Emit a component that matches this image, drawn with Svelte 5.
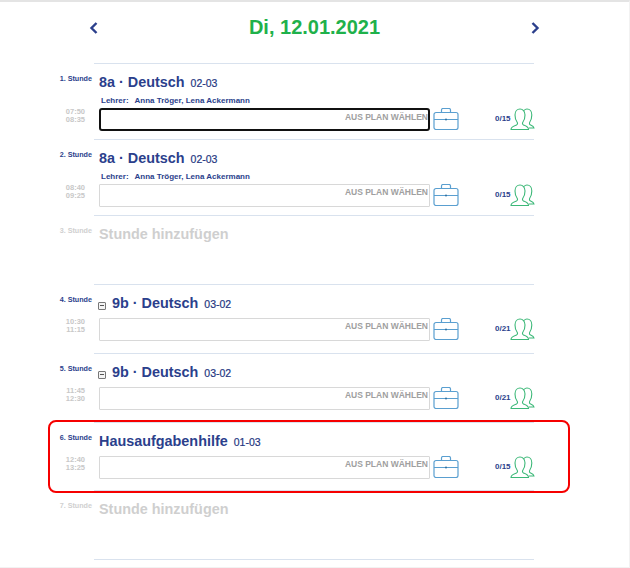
<script>
  const lessons = [
    { nr: 1, title: '8a · Deutsch', room: '02-03', teachers: 'Anna Tröger, Lena Ackermann', from: '07:50', to: '08:35', count: '0/15', focused: true, height: 76 },
    { nr: 2, title: '8a · Deutsch', room: '02-03', teachers: 'Anna Tröger, Lena Ackermann', from: '08:40', to: '09:25', count: '0/15', height: 76 },
    { nr: 3, empty: true, height: 69 },
    { nr: 4, title: '9b · Deutsch', room: '03-02', collapse: true, from: '10:30', to: '11:15', count: '0/21', height: 69 },
    { nr: 5, title: '9b · Deutsch', room: '03-02', collapse: true, from: '11:45', to: '12:30', count: '0/21', height: 69 },
    { nr: 6, title: 'Hausaufgabenhilfe', room: '01-03', from: '12:40', to: '13:25', count: '0/15', marked: true, height: 68 },
    { nr: 7, empty: true, height: 69 }
  ];
</script>

<div class="page">
  <header class="head">
    <button class="nav" aria-label="Zurück">
      <svg viewBox="0 0 10 14" width="10" height="14"><path d="M7.500 2 2.500 7l5 5" /></svg>
    </button>
    <h1>Di, 12.01.2021</h1>
    <button class="nav" aria-label="Weiter">
      <svg viewBox="0 0 10 14" width="10" height="14"><path d="M2.500 2l5 5-5 5" /></svg>
    </button>
  </header>

  <div class="list">
    {#each lessons as l}
      <section class="row" class:marked={l.marked} style="height: {l.height}px">
        <div class="side" class:faded={l.empty}>
          <div class="nr">{l.nr}. Stunde</div>
          {#if !l.empty}
            <div class="time" class:low={l.teachers}>{l.from}<br />{l.to}</div>
          {/if}
        </div>
        <div class="body">
          {#if l.empty}
            <div class="add">Stunde hinzufügen</div>
          {:else}
            <div class="title">
              {#if l.collapse}<span class="minus"></span>{/if}
              <span class="name">{l.title}</span>
              <span class="room">{l.room}</span>
            </div>
            {#if l.teachers}
              <div class="teachers"><span>Lehrer:</span>{l.teachers}</div>
            {/if}
            <div class="tools">
              <div class="field" class:focused={l.focused}>AUS PLAN WÄHLEN</div>
              <svg class="case" viewBox="0 0 26 22" width="26" height="22">
                <path d="M1 6.500a2 2 0 0 1 2-2h20a2 2 0 0 1 2 2v13a2 2 0 0 1-2 2H3a2 2 0 0 1-2-2zM1 11.500h24M8.500 4.500V2a1.500 1.500 0 0 1 1.500-1.500h6A1.500 1.500 0 0 1 17.500 2v2.500" />
                <circle cx="13" cy="11.500" r="1" />
              </svg>
              <span class="count">{l.count}</span>
              <svg class="people" viewBox="0 0 25 22" width="25" height="22">
                <path d="M1 21.500c0-3 3-3.500 5.500-4.500 1-.5 1.200-1.500.8-2.500C6 13 5 10.500 5 7c0-3.500 2.200-6 5-6s5 2.500 5 6c0 3.500-1 6-2.300 7.500-.4 1-.2 2 .8 2.500 2 .8 5 1.500 5 4.500z" />
                <path d="M14 2.500c.8-1 1.900-1.500 3-1.500 2.800 0 4.800 2.500 4.800 6 0 3.500-1 6-2.200 7.500-.4 1-.2 2 .8 2.500 1.500.6 3.300 1.200 3.600 3h-5" />
              </svg>
            </div>
          {/if}
        </div>
      </section>
    {/each}
    <div class="end"></div>
  </div>
</div>

<style>
  :global(body) {
    margin: 0;
    background: #fff;
  }
  .page {
    width: 630px;
    height: 568px;
    box-sizing: border-box;
    border-top: 2px solid #e4e4e4;
    border-right: 1px solid #f2f2f2;
    border-bottom: 1px solid #f2f2f2;
    font-family: "Liberation Sans", Arial, sans-serif;
    overflow: hidden;
  }
  .head {
    display: flex;
    align-items: center;
    justify-content: space-between;
    height: 51px;
    padding: 0 89px;
  }
  .nav {
    display: flex;
    padding: 0;
    border: 0;
    background: none;
  }
  .nav path {
    fill: none;
    stroke: #2b3f8c;
    stroke-width: 2.400;
  }
  h1 {
    margin: 0;
    font-size: 20px;
    font-weight: 700;
    color: #1fb14b;
  }
  .list {
    margin: 10px 0 0 50px;
    width: 484px;
  }
  .row {
    position: relative;
    display: grid;
    grid-template-columns: 44px 1fr;
  }
  .marked::after {
    content: "";
    position: absolute;
    inset: -2px -36px -3px -2px;
    border: 2px solid #f60000;
    border-radius: 8px;
  }
  .side {
    position: relative;
    padding: 11px 2px 0 0;
    text-align: right;
    font-size: 7.200px;
    font-weight: 700;
    color: #2b3f8c;
  }
  .side.faded { color: #d0d0d0; }
  .time {
    position: absolute;
    top: 34px;
    right: 9px;
    font-size: 7.500px;
    line-height: 8px;
    color: #c8c8c8;
  }
  .time.low { top: 45px; }
  .body {
    border-top: 1px solid #d9e2ee;
    padding: 0 0 0 5px;
    min-width: 0;
  }
  .title {
    display: flex;
    align-items: baseline;
    height: 20px;
    margin-top: 10px;
    color: #2b3f8c;
    white-space: nowrap;
  }
  .name {
    font-size: 14.400px;
    font-weight: 700;
  }
  .room {
    margin-left: 6px;
    font-size: 10.500px;
    color: #24367f;
    -webkit-text-stroke: 0.2px #24367f;
  }
  .minus {
    position: relative;
    align-self: center;
    box-sizing: border-box;
    flex: none;
    width: 8px;
    height: 8px;
    margin: 2px 6px 0 -1px;
    border: 1px solid #777;
    border-radius: 1px;
    background: #f4f4f4;
  }
  .minus::after {
    content: "";
    position: absolute;
    left: 1px;
    right: 1px;
    top: 2px;
    height: 1px;
    background: #555;
  }
  .teachers {
    margin: 1px 0 -1px 2px;
    font-size: 8px;
    font-weight: 700;
    color: #2b3f8c;
    line-height: 11px;
    white-space: nowrap;
  }
  .teachers span { margin-right: 6px; }
  .tools {
    display: flex;
    align-items: flex-start;
    margin-top: 3px;
  }
  .tools > * { flex: none; }
  .field {
    box-sizing: border-box;
    width: 331px;
    height: 23px;
    padding: 2px 1px 0 0;
    border: 1px solid #d8d8d8;
    border-radius: 1px;
    text-align: right;
    font-size: 8.500px;
    font-weight: 700;
    color: #a0a0a0;
    white-space: nowrap;
  }
  .field.focused {
    border: 2px solid #111;
    border-radius: 3px;
    padding-top: 2px;
    padding-right: 0;
  }
  .case {
    margin-left: 3px;
  }
  .case path {
    fill: none;
    stroke: #5a9fd0;
    stroke-width: 1.200;
  }
  .case circle { fill: #2f6f9f; }
  .count {
    margin: 6px 0 0 36px;
    width: 15px;
    font-size: 8px;
    font-weight: 700;
    color: #2b3f8c;
  }
  .people path {
    fill: none;
    stroke: #3cb878;
    stroke-width: 1.100;
  }
  .add {
    margin-top: 10px;
    font-size: 14.400px;
    font-weight: 700;
    color: #cfcfcf;
  }
  .end {
    margin-left: 44px;
    border-top: 1px solid #d9e2ee;
  }
</style>
